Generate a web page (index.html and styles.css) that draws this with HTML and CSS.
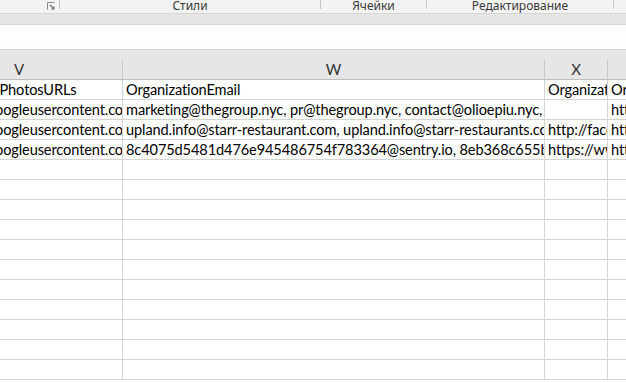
FILE: index.html
```html
<!DOCTYPE html>
<html lang="ru">
<head>
    <meta charset="UTF-8">
    <meta name="viewport" content="width=device-width, initial-scale=1.0">
    <title>Книга1 - Excel</title>
    <link rel="stylesheet" href="styles.css">
</head>
<body>
    <div class="ribbon-groups">
        <div class="group group-first">
            <svg class="launcher" width="8" height="8" viewBox="0 0 8 8">
                <path d="M0.5 7.5V0.5H7.5" fill="none" stroke="#8a8a8a" stroke-width="1"/>
                <path d="M3 3L6.5 6.5" stroke="#6a6a6a" stroke-width="1.2"/>
                <path d="M4 7.5H7.5V4Z" fill="#6a6a6a"/>
            </svg>
        </div>
        <span class="sep"></span>
        <div class="group group-styles">Стили</div>
        <span class="sep"></span>
        <div class="group group-cells">Ячейки</div>
        <span class="sep"></span>
        <div class="group group-edit">Редактирование</div>
        <span class="sep"></span>
    </div>
    <div class="band"></div>
    <div class="formula-bar"></div>

    <div class="sheet">
        <div class="col-top"></div>
        <div class="grid">
            <div class="row head">
                <div class="c v">V</div>
                <div class="c w">W</div>
                <div class="c x">X</div>
                <div class="c y">Y</div>
            </div>
            <div class="row">
                <div class="c v">OrganizationPhotosURLs</div>
                <div class="c w">OrganizationEmail</div>
                <div class="c x">OrganizationFacebook</div>
                <div class="c y">OrganizationTwitter</div>
            </div>
            <div class="row">
                <div class="c v">https://lh5.googleusercontent.com/p/AF1QipNd</div>
                <div class="c w">marketing@thegroup.nyc, pr@thegroup.nyc, contact@olioepiu.nyc, </div>
                <div class="c x"></div>
                <div class="c y">https://twitter.com/</div>
            </div>
            <div class="row">
                <div class="c v">https://lh5.googleusercontent.com/p/AF1QipOk</div>
                <div class="c w">upland.info@starr-restaurant.com, upland.info@starr-restaurants.com</div>
                <div class="c x">http://facebook.com/uplandnyc</div>
                <div class="c y">https://twitter.com/</div>
            </div>
            <div class="row">
                <div class="c v">https://lh5.googleusercontent.com/p/AF1QipMx</div>
                <div class="c w">8c4075d5481d476e945486754f783364@sentry.io, 8eb368c655b84e029a1f</div>
                <div class="c x">https://www.facebook.com/</div>
                <div class="c y">https://twitter.com/</div>
            </div>
            <div class="row"><div class="c v"></div><div class="c w"></div><div class="c x"></div><div class="c y"></div></div>
            <div class="row"><div class="c v"></div><div class="c w"></div><div class="c x"></div><div class="c y"></div></div>
            <div class="row"><div class="c v"></div><div class="c w"></div><div class="c x"></div><div class="c y"></div></div>
            <div class="row"><div class="c v"></div><div class="c w"></div><div class="c x"></div><div class="c y"></div></div>
            <div class="row"><div class="c v"></div><div class="c w"></div><div class="c x"></div><div class="c y"></div></div>
            <div class="row"><div class="c v"></div><div class="c w"></div><div class="c x"></div><div class="c y"></div></div>
            <div class="row"><div class="c v"></div><div class="c w"></div><div class="c x"></div><div class="c y"></div></div>
            <div class="row"><div class="c v"></div><div class="c w"></div><div class="c x"></div><div class="c y"></div></div>
            <div class="row"><div class="c v"></div><div class="c w"></div><div class="c x"></div><div class="c y"></div></div>
            <div class="row"><div class="c v"></div><div class="c w"></div><div class="c x"></div><div class="c y"></div></div>
            <div class="row"><div class="c v"></div><div class="c w"></div><div class="c x"></div><div class="c y"></div></div>
        </div>
    </div>
</body>
</html>
```

FILE: styles.css
```css
* {
    box-sizing: border-box;
}
body {
    margin: 0;
    width: 626px;
    height: 382px;
    overflow: hidden;
    background-color: #ffffff;
    font-family: "Noto Sans", "Open Sans", sans-serif;
}

/* ribbon group captions */
.ribbon-groups {
    display: flex;
    align-items: flex-start;
    height: 14px;
    background-color: #f3f3f3;
    border-bottom: 1px solid #d5d5d5;
}
.group {
    height: 13px;
    font-size: 12px;
    line-height: 12px;
    color: #3a3a3a;
    text-align: center;
}
.group-first {
    width: 59px;
    display: flex;
    justify-content: flex-end;
    padding: 2px 4px 0 0;
}
.group-styles { width: 260px; }
.group-cells { width: 105px; }
.group-edit { width: 186px; }
.sep {
    width: 1px;
    height: 9px;
    background-color: #c4c4c4;
}

.band {
    height: 11px;
    background-color: #e6e6e6;
    border-bottom: 1px solid #d5d5d5;
}
.formula-bar {
    height: 25px;
    background-color: #fdfdfd;
    border-bottom: 1px solid #d5d5d5;
}

/* sheet */
.sheet {
    overflow: hidden;
}
.col-top {
    height: 10px;
    background-color: #e6e6e6;
}
.grid {
    margin-left: -84px;
    width: 794px;
}
.row {
    display: flex;
    height: 20px;
}
.c {
    height: 20px;
    padding: 0 3px;
    border-right: 1px solid #d4d4d4;
    border-bottom: 1px solid #d4d4d4;
    font-family: Lato, "Liberation Sans", sans-serif;
    font-size: 14.6px;
    letter-spacing: -0.12px;
    line-height: 19px;
    color: #000000;
    white-space: nowrap;
    overflow: hidden;
}
.v { width: 207px; }
.w { width: 422px; }
.x { width: 63px; }
.y { width: 102px; }

.head .c {
    background-color: #e6e6e6;
    border-right-color: #c8c8c8;
    border-bottom-color: #bdbdbd;
    color: #333333;
    font-size: 15px;
    letter-spacing: 0;
    text-align: center;
}
```
